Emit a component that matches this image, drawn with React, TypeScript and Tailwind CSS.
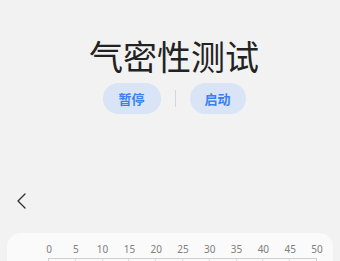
import React from "react";

const ticks = [0, 5, 10, 15, 20, 25, 30, 35, 40, 45, 50];

export default function App() {
  return (
    <div
      className="w-[340px] h-[261px] overflow-hidden bg-[#f2f2f2] flex flex-col"
      style={{ fontFamily: '"Noto Sans CJK SC", "Noto Sans", sans-serif' }}
    >
      <div className="pt-[31px] flex flex-col items-center pl-[8px]">
        <div className="text-[34px] leading-[50px] text-[#222222]">气密性测试</div>
        <div className="mt-[2px] flex items-center">
          <button className="w-[58px] h-[31px] rounded-full bg-[#d9e4f6] text-[#3b7ff0] text-[13px] font-bold">暂停</button>
          <div className="mx-[14px] w-px h-[17px] bg-[#d6d6d6]" />
          <button className="w-[56px] h-[31px] rounded-full bg-[#d9e4f6] text-[#3b7ff0] text-[13px] font-bold">启动</button>
        </div>
      </div>
      <div className="mt-[78px] pl-[15px] h-[20px] flex items-center">
        <svg width="14" height="18" viewBox="0 0 14 18" fill="none">
          <path d="M10 2 L3 9 L10 16" stroke="#333" strokeWidth="1.4" strokeLinecap="round" strokeLinejoin="round" />
        </svg>
      </div>
      <div className="mt-[23px] mx-[7px] flex-1 bg-[#fafafa] rounded-t-[14px] pt-[10px]">
        <div className="pl-[28.6px] flex">
          {ticks.map((t) => (
            <div
              key={t}
              className="w-[26.8px] text-center text-[10px] leading-[12px] text-[#808080]"
              style={{ fontFamily: '"Noto Sans", sans-serif' }}
            >
              {t}
            </div>
          ))}
        </div>
        <div className="ml-[41px] w-[269px] mt-[3px] h-[8px] border-t border-l border-r border-[#cfcfcf] flex">
          {ticks.slice(0, 10).map((t) => (
            <div key={t} className="flex-1 border-r border-[#dcdcdc] last:border-r-0" />
          ))}
        </div>
      </div>
    </div>
  );
}
